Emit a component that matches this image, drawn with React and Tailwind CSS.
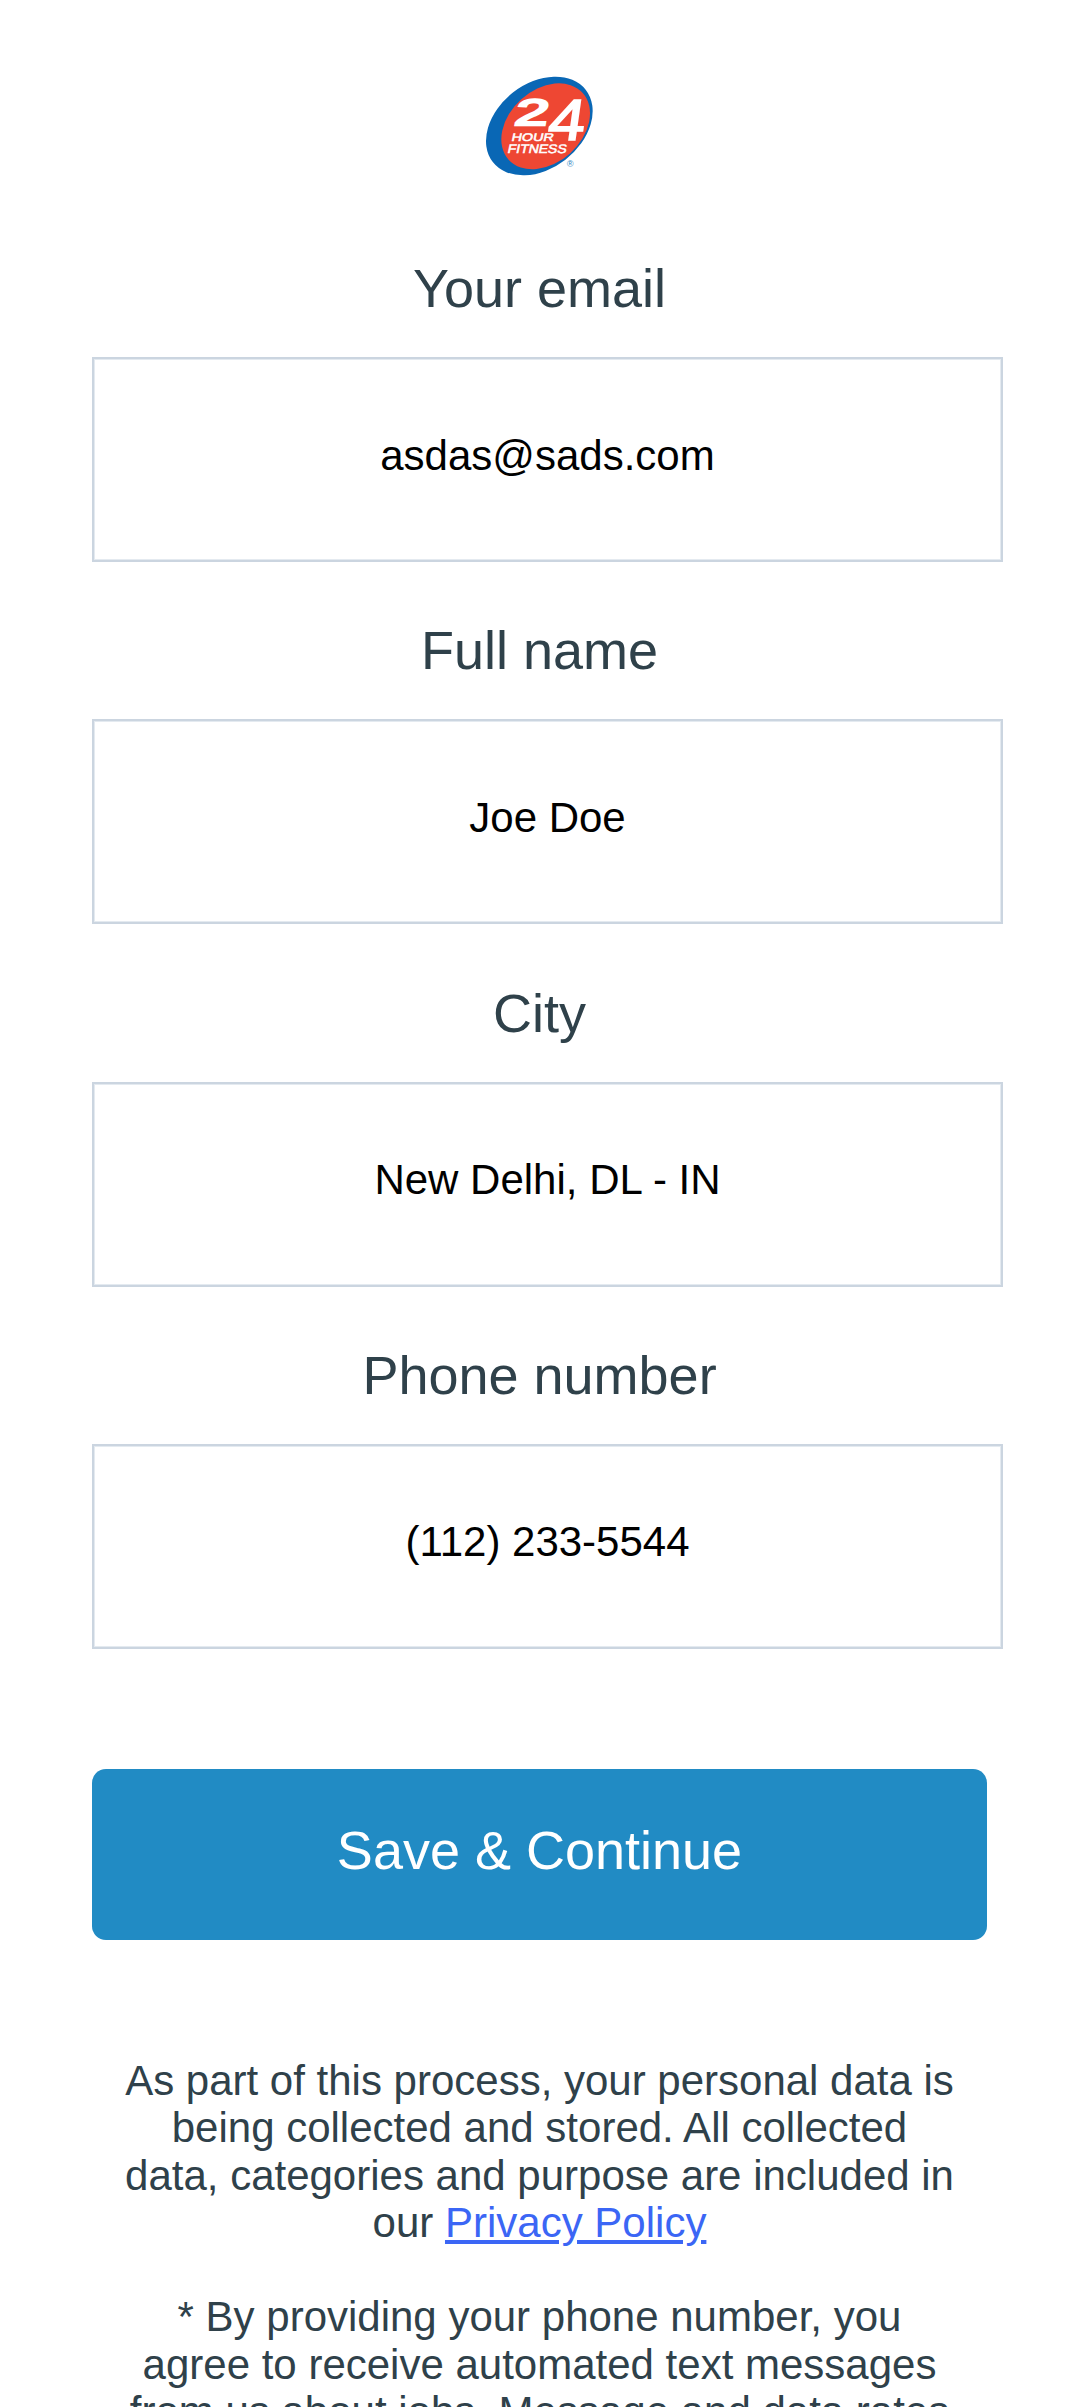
const fields = [
  { id: "email", label: "Your email", value: "asdas@sads.com" },
  { id: "name", label: "Full name", value: "Joe Doe" },
  { id: "city", label: "City", value: "New Delhi, DL - IN" },
  { id: "phone", label: "Phone number", value: "(112) 233-5544" },
];

function Logo() {
  return (
    <svg viewBox="0 0 420 390" className="ml-[470px] h-[130px] w-[140px]" role="img" aria-label="24 Hour Fitness">
      <ellipse cx="208" cy="198" rx="176.6" ry="127.7" transform="rotate(-37.8 208 198)" fill="#0967b5" />
      <ellipse cx="227" cy="199" rx="149.6" ry="109.3" transform="rotate(-42 227 199)" fill="#ee4733" />
      <g fill="#fff" stroke="#fff" fontFamily="'Liberation Sans', Arial, sans-serif">
        <g fontWeight="400">
          <text transform="translate(130 196) skewX(-10) scale(1.65 1)" fontSize="110" strokeWidth="7">2</text>
          <text transform="translate(229 240) skewX(-8) scale(1.14 1)" fontSize="174" strokeWidth="5">4</text>
        </g>
        <g fontWeight="400" strokeWidth="1.5">
          <text transform="translate(123 243) skewX(-12)" fontSize="33" textLength="126" lengthAdjust="spacingAndGlyphs">HOUR</text>
          <text transform="translate(111 279) skewX(-12)" fontSize="37" textLength="177" lengthAdjust="spacingAndGlyphs">FITNESS</text>
        </g>
      </g>
      <text x="290" y="321" fontSize="27" fontFamily="'Liberation Sans', Arial, sans-serif" fontStyle="italic" fill="#2f86c2">®</text>
    </svg>
  );
}

export default function App() {
  return (
    <main className="h-[2407px] w-[1079px] overflow-hidden bg-white pt-[60px] font-['Liberation_Sans',Arial,sans-serif] text-[#2f414a]">
      <Logo />
      <form className="mt-[68px] pl-[92px]">
        {fields.map((f) => (
          <div key={f.id} className="h-[362.25px]">
            <label htmlFor={f.id} className="block h-[99px] w-[895px] text-center text-[54px] leading-[60px]">
              {f.label}
            </label>
            <input
              id={f.id}
              defaultValue={f.value}
              className="block h-[205px] w-[911px] border-2 border-[#cbd5e0] pb-[8px] text-center text-[42px] leading-[48px] text-black shadow-[inset_0_0_0_1px_#e4eaf0] outline-none"
            />
          </div>
        ))}
        <button
          type="button"
          className="mt-[62px] block h-[171px] w-[895px] rounded-[14px] bg-[#218bc4] pb-[9px] text-center text-[54px] leading-[60px] text-white"
        >
          Save &amp; Continue
        </button>
      </form>
      <div className="mt-[117px] ml-[119px] w-[841px] text-center text-[42px] leading-[47.25px]">
        <p>
          As part of this process, your personal data is
          <br />
          being collected and stored. All collected
          <br />
          data, categories and purpose are included in
          <br />
          our{" "}
          <a href="#privacy" className="text-[#3b66f5] underline">
            Privacy Policy
          </a>
        </p>
        <p className="mt-[47.25px]">
          * By providing your phone number, you
          <br />
          agree to receive automated text messages
          <br />
          from us about jobs. Message and data rates
        </p>
      </div>
    </main>
  );
}
